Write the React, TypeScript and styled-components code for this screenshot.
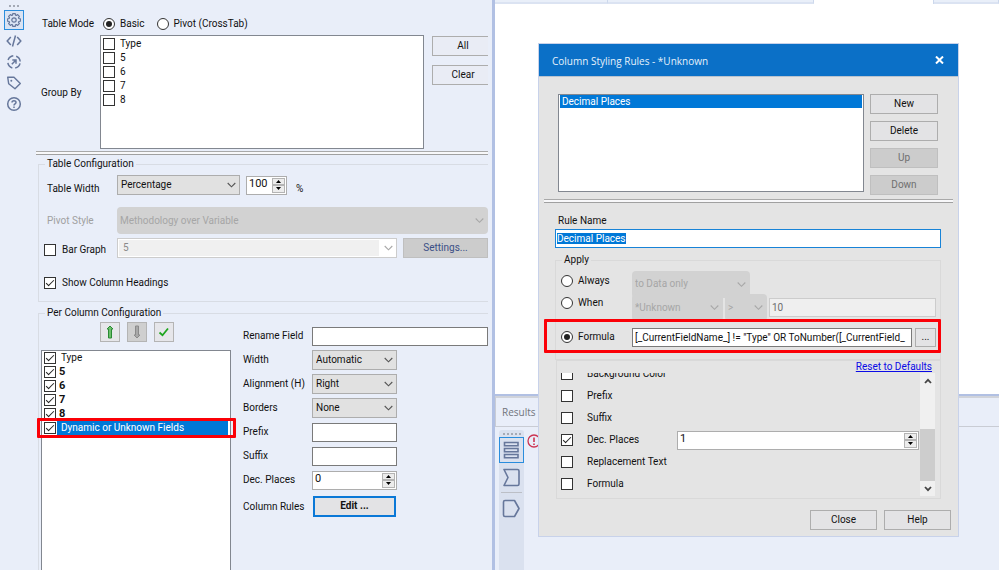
import React, { useEffect, useRef } from "react";
import styled, { createGlobalStyle, css } from "styled-components";

const GlobalStyle = createGlobalStyle`
  *, *::before, *::after { box-sizing: border-box; }
  html, body { margin: 0; height: 100%; overflow: hidden; }
  #root { height: 100%; }
  body, button, input, select {
    font-family: Roboto, "Liberation Sans", Arial, sans-serif;
    font-size: 10px;
    line-height: 14px;
    color: #111;
  }
  button, input, select, fieldset, legend { margin: 0; padding: 0; }
`;

/* ---------- shell ---------- */

const Shell = styled.div`
  display: grid;
  grid-template-columns: 495fr 504fr;
  height: 100vh;
  overflow: hidden;
  background: #e9eef9;
`;

const ConfigPane = styled.section`
  display: flex;
  min-width: 0;
  min-height: 0;
  border-right: 3px solid #b1c0e3;
`;

const SideBar = styled.nav`
  flex: none;
  display: flex;
  flex-direction: column;
  align-items: center;
  width: 28px;
  padding-top: 2px;
  gap: 1px;
`;

const SideButton = styled.button<{ $active?: boolean }>`
  display: grid;
  place-items: center;
  width: 20px;
  height: 20px;
  border: 1px solid ${(p) => (p.$active ? "#2a8ddd" : "transparent")};
  background: ${(p) => (p.$active ? "#d9e3f3" : "transparent")};
  color: #66779b;
`;

const Grip = styled.div`
  height: 7px;
  display: flex;
  align-items: center;
  justify-content: center;
  gap: 2px;
  i {
    width: 2px;
    height: 2px;
    background: #a5aab5;
  }
`;

const ConfigForm = styled.form`
  flex: 1;
  min-width: 0;
  display: flex;
  flex-direction: column;
  margin: 0 4px 0 8px;
  overflow: hidden;
`;

/* ---------- shared controls ---------- */

const Btn = styled.button<{ $primary?: boolean; $w?: number }>`
  flex: none;
  width: ${(p) => (p.$w ? p.$w + "px" : "100%")};
  height: 20px;
  border: 1px solid #adadad;
  background: #e3e3e5;
  &:disabled {
    background: #cccccc;
    border-color: #bfbfbf;
    color: #6f6f6f;
  }
  ${(p) =>
    p.$primary &&
    css`
      height: 21px;
      border: 2px solid #0a78d7;
      font-weight: bold;
    `}
`;

const PaneBtn = styled(Btn)`
  background: #e9ecf5;
`;

const SettingsBtn = styled(Btn)`
  &:disabled {
    color: #3b4f86;
  }
`;

const Check = styled.input.attrs({ type: "checkbox" })`
  appearance: none;
  flex: none;
  width: 12px;
  height: 12px;
  border: 1px solid #333;
  background: #fff;
  display: grid;
  place-items: center;
  &:checked::before {
    content: "";
    width: 8px;
    height: 4px;
    margin-top: -2px;
    border-left: 1px solid #222;
    border-bottom: 1px solid #222;
    transform: rotate(-45deg);
  }
`;

const Radio = styled.input.attrs({ type: "radio" })`
  appearance: none;
  flex: none;
  width: 12px;
  height: 12px;
  border: 1px solid #333;
  border-radius: 50%;
  background: #fff;
  display: grid;
  place-items: center;
  &:checked::before {
    content: "";
    width: 6px;
    height: 6px;
    border-radius: 50%;
    background: #222;
  }
`;

const TextBox = styled.input<{ $tone?: "accent" | "muted" }>`
  display: block;
  width: 100%;
  min-width: 0;
  height: 19px;
  padding: 0 2px;
  border: 1px solid #7a7a7a;
  border-radius: 0;
  background: #fff;
  outline: none;
  ${(p) => p.$tone === "accent" && "border-color: #1883d7; padding: 0 1px;"}
  ${(p) => p.$tone === "muted" && "border-color: #ccc; background: #efefef; color: #6d6d6d;"}
  &::selection {
    background: #0078d7;
    color: #fff;
  }
`;

const SelectWrap = styled.span<{ $w?: number }>`
  position: relative;
  display: block;
  flex: ${(p) => (p.$w ? "none" : "1")};
  width: ${(p) => (p.$w ? p.$w + "px" : "auto")};
  min-width: 0;
  svg {
    position: absolute;
    right: 4px;
    top: 0;
    height: 100%;
    pointer-events: none;
  }
`;

type Look = "normal" | "ghost" | "combo";

const SelectBox = styled.select<{ $look: Look }>`
  appearance: none;
  display: block;
  width: 100%;
  height: 20px;
  padding: 0 20px 0 3px;
  border: 1px solid #adadad;
  border-radius: 0;
  background: #e1e1e1;
  opacity: 1;
  ${(p) =>
    p.$look === "ghost" &&
    css`
      height: 27px;
      border: 0;
      border-radius: 4px;
      background: #d2d2d2;
      color: #a6a6a6;
    `}
  ${(p) =>
    p.$look === "combo" &&
    css`
      padding-left: 5px;
      border-color: #ccc;
      background: linear-gradient(to left, #fff 17px, #f0f0f0 17px);
      box-shadow: inset 0 0 0 1px #fff;
      color: #8a8a8a;
    `}
`;

function Select(props: {
  label: string;
  value: string;
  w?: number;
  look?: Look;
  id?: string;
}) {
  const look = props.look ?? "normal";
  const off = look !== "normal";
  return (
    <SelectWrap $w={props.w}>
      <SelectBox id={props.id} aria-label={props.label} $look={look} disabled={off} defaultValue={props.value}>
        <option>{props.value}</option>
      </SelectBox>
      <svg width="9" viewBox="0 0 9 6" fill="none" stroke={off ? "#a8a8a8" : "#555"} strokeWidth="1.1">
        <path d="M.7 1l3.8 3.8L8.300 1" />
      </svg>
    </SelectWrap>
  );
}

const SpinWrap = styled.span<{ $w?: number }>`
  display: flex;
  flex: ${(p) => (p.$w ? "none" : "1")};
  width: ${(p) => (p.$w ? p.$w + "px" : "auto")};
  height: 19px;
  padding: 1px;
  border: 1px solid #adadad;
  background: #fff;
  input {
    appearance: textfield;
    flex: 1;
    min-width: 0;
    border: 0;
    outline: none;
    padding: 0 1px 2px;
    font-size: 11px;
  }
  input::-webkit-inner-spin-button {
    appearance: none;
  }
`;

const SpinButtons = styled.span`
  flex: none;
  display: grid;
  grid-template-rows: 1fr 1fr;
  width: 13px;
  button {
    display: grid;
    place-items: center;
    min-height: 0;
    border: 1px solid #b4b4b4;
    background: #ececec;
  }
`;

function Spinner(props: { label: string; value: number; w?: number; id?: string }) {
  return (
    <SpinWrap $w={props.w}>
      <input id={props.id} type="number" aria-label={props.label} defaultValue={props.value} />
      <SpinButtons>
        <button type="button" aria-label="Increase">
          <svg width="5" height="3" viewBox="0 0 5 3"><path d="M0 3L2.500 0L5 3z" /></svg>
        </button>
        <button type="button" aria-label="Decrease">
          <svg width="5" height="3" viewBox="0 0 5 3"><path d="M0 0L2.500 3L5 0z" /></svg>
        </button>
      </SpinButtons>
    </SpinWrap>
  );
}

const Option = styled.label`
  display: flex;
  align-items: center;
  gap: 5px;
  white-space: nowrap;
`;

const Rule = styled.hr`
  flex: none;
  width: 100%;
  height: 4px;
  margin: 0;
  border: 0;
  border-top: 1px solid #a9a9a9;
  border-bottom: 1px solid #a0a0a0;
  background: #f8f8fa;
`;

const Highlight = styled.div<{ $inset: string }>`
  position: absolute;
  inset: ${(p) => p.$inset};
  border: 3px solid #fb0007;
  border-radius: 1px;
  pointer-events: none;
  z-index: 2;
`;

/* ---------- configuration form ---------- */

const ModeRow = styled.div`
  display: flex;
  align-items: center;
  height: 20px;
  margin-top: 14px;
  padding-left: 6px;
`;

const ModeLabel = styled.span`
  width: 61px;
`;

const ModeOption = styled(Option)`
  margin-right: 12px;
`;

const GroupRow = styled.div`
  display: grid;
  grid-template-columns: 59px minmax(0, 1fr) 64px;
  padding-left: 5px;
  margin-top: 1px;
  height: 114px;
`;

const GroupLabel = styled.span`
  align-self: center;
  padding-top: 2px;
`;

const ListBox = styled.div`
  border: 1px solid #828790;
  background: #fff;
  padding: 1px 2px;
  min-height: 0;
  overflow: hidden;
`;

const ListItem = styled.label<{ $bold?: boolean; $selected?: boolean }>`
  position: relative;
  display: flex;
  align-items: center;
  height: 14px;
  font-weight: ${(p) => (p.$bold ? "bold" : "normal")};
  span {
    flex: 1;
    margin-left: 1px;
    padding-left: ${(p) => (p.$bold ? "2px" : "4px")};
    ${(p) => p.$bold && "font-size: 11px;"}
    ${(p) => p.$selected && "background: #0078d7; color: #fff;"}
  }
`;

const GroupButtons = styled.div`
  display: flex;
  flex-direction: column;
  align-items: flex-start;
  gap: 9px;
  margin: 1px 0 0 8px;
  overflow: hidden;
`;

const Group = styled.fieldset<{ $open?: boolean }>`
  position: relative;
  min-width: 0;
  border: 1px solid #d8dce4;
  ${(p) => p.$open && "border-right: 0;"}
  legend {
    margin-left: 6px;
    padding: 0 2px;
    height: 14px;
  }
`;

const TableGroup = styled(Group)`
  flex: none;
  margin: 2px 0 0 2px;
  padding-bottom: 8px;
`;

const Line = styled.div<{ $top?: number; $h?: number }>`
  display: flex;
  align-items: center;
  height: ${(p) => p.$h ?? 20}px;
  margin-top: ${(p) => p.$top ?? 0}px;
  padding-left: 5px;
`;

const FieldLabel = styled.label<{ $dim?: boolean; $low?: boolean }>`
  flex: none;
  width: 73px;
  padding-left: 3px;
  padding-top: ${(p) => (p.$low ? "7px" : "0")};
  color: ${(p) => (p.$dim ? "#a0a0a0" : "inherit")};
`;

const BarLabel = styled(Option)`
  flex: none;
  width: 73px;
  gap: 6px;
`;

const BarGraphLabel = styled(BarLabel)`
  padding-top: 4px;
`;

const Percent = styled.span`
  margin-left: 9px;
  padding-top: 7px;
`;

const Gap = styled.span`
  flex: none;
  width: 6px;
`;

const ColumnGroup = styled(Group)`
  flex: 1;
  min-height: 0;
  margin: 4px 0 0 2px;
  border-bottom: 0;
`;

const ColumnGrid = styled.div`
  display: grid;
  grid-template-columns: 190px minmax(0, 1fr);
  column-gap: 12px;
  height: calc(100vh - 316px);
  padding-left: 2px;
`;

const ColumnSide = styled.div`
  display: flex;
  flex-direction: column;
  min-height: 0;
`;

const Tools = styled.div`
  display: flex;
  gap: 7px;
  margin: 2px 0 8px 59px;
`;

const Tool = styled.button`
  display: grid;
  place-items: center;
  width: 20px;
  height: 20px;
  border: 1px solid #b4b4b4;
  background: #e6e6ea;
  &:disabled {
    background: #cfcfcf;
  }
`;

const ColumnList = styled(ListBox)`
  flex: 1;
  padding: 0 2px;
  overflow: visible;
`;

const Fields = styled.div`
  display: grid;
  grid-template-columns: 69px minmax(0, 1fr);
  grid-auto-rows: 20px;
  row-gap: 4px;
  align-content: start;
  align-items: center;
  padding-top: 6px;
`;

const Fixed = styled.div`
  width: 85px;
`;

const RulesButton = styled(Btn)`
  margin: 4px 0 0 1px;
`;

const RulesLabel = styled.span`
  padding-top: 6px;
`;

const RuleSpace = styled.div`
  flex: none;
  display: flex;
  padding-top: 2px;
`;

/* ---------- workspace ---------- */

const Workspace = styled.main`
  position: relative;
  display: flex;
  flex-direction: column;
  min-width: 0;
  background: #fff;
`;

const TabStrip = styled.div`
  display: grid;
  grid-template-columns: 113fr 206fr 120fr 65fr;
  flex: none;
  height: 4px;
`;

const Tab = styled.div<{ $active?: boolean }>`
  border-right: 1px solid #ccd8ec;
  border-bottom: ${(p) => (p.$active ? "0" : "2px solid #dbe3f2")};
  background: ${(p) => (p.$active ? "#fff" : "#e9eff9")};
`;

const Canvas = styled.div`
  flex: 1;
`;

const Results = styled.section`
  flex: none;
  height: 176px;
  border-top: 2px solid #b1c0e3;
  background: #e9eef9;
`;

const ResultsHead = styled.header`
  display: flex;
  align-items: center;
  height: 31px;
  padding-left: 6px;
  border: 1px solid #c9ccd4;
  border-top: 2px solid #d0d3da;
  border-right: 0;
  font: 10px "Open Sans", sans-serif;
  color: #70747c;
`;

const ResultsBody = styled.div`
  display: flex;
  height: 143px;
  padding: 3px 0 0 4px;
`;

const ResultsTools = styled.div`
  display: flex;
  flex-direction: column;
  align-items: center;
  width: 25px;
  background: #dae1ef;
  border-radius: 3px 3px 0 0;
`;

const ResultsTool = styled.button<{ $active?: boolean }>`
  display: grid;
  place-items: center;
  width: 25px;
  height: ${(p) => (p.$active ? 26 : 28)}px;
  border: ${(p) => (p.$active ? "1px solid #2a8ddd" : "0")};
  background: transparent;
  svg {
    fill: none;
    stroke: #66779b;
    stroke-width: 1.6;
  }
`;

const ToolRule = styled.hr`
  width: 21px;
  height: 1px;
  margin: 1px 0;
  border: 0;
  background: #bcbfc6;
`;

const Alert = styled.svg`
  margin: 4px 0 0 3px;
`;

/* ---------- dialog ---------- */

const Dialog = styled.section`
  position: absolute;
  left: 43px;
  top: 43px;
  width: 421px;
  border: 1px solid #c8d2ea;
  background: #e4e4e4;
`;

const TitleBar = styled.header`
  display: flex;
  align-items: center;
  justify-content: space-between;
  height: 33px;
  padding: 0 11px 0 13px;
  border-bottom: 1px solid #b9c3cf;
  background: #0b70c7;
  h1 {
    margin: 0;
    padding-top: 2px;
    font: 10px "Open Sans", sans-serif;
    color: #e6f1fb;
  }
`;

const CloseX = styled.button`
  display: grid;
  place-items: center;
  width: 16px;
  height: 20px;
  border: 0;
  background: transparent;
`;

const RuleArea = styled.div`
  display: grid;
  grid-template-columns: minmax(0, 1fr) 68px;
  column-gap: 6px;
  padding: 17px 20px 4px 19px;
`;

const RuleList = styled(ListBox)`
  margin-bottom: 3px;
  padding: 0 1px;
  div {
    height: 13px;
    padding-left: 2px;
    line-height: 14px;
    background: #0078d7;
    color: #fff;
  }
`;

const RuleButtons = styled.div`
  display: flex;
  flex-direction: column;
  gap: 7px;
`;

const DialogRule = styled.div`
  padding: 0 5px;
  display: flex;
`;

const DialogBody = styled.div`
  padding: 11px 17px 0 16px;
`;

const NameLabel = styled.label`
  display: block;
  height: 15px;
  padding-left: 3px;
`;

const ApplyGroup = styled(Group)`
  margin-top: 5px;
  height: 107px;
  border-color: #d9d9d9;
`;

const ApplyGrid = styled.div`
  display: grid;
  grid-template-columns: 71px minmax(0, 1fr);
  grid-template-rows: 22px 25px 38px;
  padding: 4px 4px 0 5px;
`;

const ApplyRow = styled.div<{ $drop?: boolean }>`
  display: flex;
  align-items: center;
  gap: 2px;
  min-width: 0;
  padding-top: ${(p) => (p.$drop ? "4px" : "0")};
`;

const MiniButton = styled(Btn)`
  width: 21px;
  height: 19px;
  margin-left: 1px;
`;

const ApplyOption = styled(Option)`
  height: 20px;
  align-self: start;
`;

const FormulaOption = styled(Option)`
  align-self: center;
`;

const StyleGroup = styled(Group)`
  margin-left: 1px;
  height: 139px;
  border-color: #d9d9d9;
`;

const ResetRow = styled.div`
  display: flex;
  justify-content: flex-end;
  height: 12px;
  padding-right: 8px;
  a {
    line-height: 12px;
    color: #0a0ae6;
  }
`;

const ScrollRow = styled.div`
  display: flex;
  height: 123px;
  padding: 0 5px 0 4px;
`;

const StyleRows = styled.div`
  flex: 1;
  display: flex;
  flex-direction: column;
  justify-content: flex-end;
  min-width: 0;
  padding-bottom: 1px;
  overflow: hidden;
`;

const StyleRow = styled.div`
  flex: none;
  display: flex;
  align-items: center;
  height: 22px;
`;

const StyleLabel = styled(Option)`
  width: 116px;
  gap: 14px;
`;

const ScrollBar = styled.div`
  flex: none;
  display: grid;
  grid-template-rows: 16px 1fr 52px 15px;
  justify-items: stretch;
  width: 15px;
  margin-left: 1px;
  background: #f0f0f0;
  button {
    display: grid;
    place-items: center;
    border: 0;
    background: transparent;
  }
`;

const Thumb = styled.div`
  grid-row: 3;
  background: #cdcdcd;
`;

const BottomArrow = styled.button`
  grid-row: 4;
`;

const DialogFoot = styled.footer`
  display: flex;
  justify-content: flex-end;
  gap: 7px;
  padding: 11px 7px 6px;
`;

/* ---------- icons ---------- */

function GearIcon() {
  const teeth = Array.from({ length: 8 }, (_, i) => {
    const at = (r: number, d: number) => {
      const a = ((i * 45 + d) * Math.PI) / 180;
      return `${(8 + r * Math.cos(a)).toFixed(2)} ${(8 + r * Math.sin(a)).toFixed(2)}`;
    };
    return `${i ? "L" : "M"}${at(6.5, -11)}L${at(6.5, 11)}L${at(5.1, 17)}L${at(5.1, 28)}`;
  }).join("");
  return (
    <svg width="16" height="16" viewBox="0 0 16 16" fill="none" stroke="currentColor" strokeWidth="1.2" strokeLinejoin="round">
      <path d={teeth + "Z"} />
      <circle cx="8" cy="8" r="2.200" />
    </svg>
  );
}

const CodeIcon = () => (
  <svg width="16" height="16" viewBox="0 0 16 16" fill="none" stroke="currentColor" strokeWidth="1.500">
    <path d="M4.800 4L1.200 8l3.600 4M11.200 4l3.600 4l-3.600 4M9.500 2.500l-3 11" />
  </svg>
);

const TargetIcon = () => (
  <svg width="16" height="16" viewBox="0 0 16 16" fill="none" stroke="currentColor" strokeWidth="1.500">
    <circle cx="8" cy="8" r="6.200" strokeDasharray="6.740 3" strokeDashoffset="-1.500" />
    <path d="M5.800 10.200L9.500 6.500M6.300 6h3.700v3.700" />
  </svg>
);

const TagIcon = () => (
  <svg width="16" height="16" viewBox="0 0 16 16" fill="none" stroke="currentColor" strokeWidth="1.400" strokeLinejoin="round">
    <path d="M1.700 2.200h6.300l6.300 6.300l-5.300 5.300l-6.300-5z" />
    <circle cx="5.300" cy="5.700" r="1" fill="currentColor" stroke="none" />
  </svg>
);

const HelpIcon = () => (
  <svg width="16" height="16" viewBox="0 0 16 16" fill="none" stroke="currentColor" strokeWidth="1.500">
    <circle cx="8" cy="8" r="6.300" />
    <path d="M6 6.600c0-2.600 4-2.500 4-.2c0 1.400-2 1.400-2 3M8 10.500v1.500" />
  </svg>
);

const Dots = ({ n }: { n: number }) => (
  <Grip aria-hidden>
    {Array.from({ length: n }, (_, i) => (
      <i key={i} />
    ))}
  </Grip>
);

/* ---------- page ---------- */

const styleRows = ["Background Color", "Prefix", "Suffix", "Dec. Places", "Replacement Text", "Formula"];
const groupItems = ["Type", "5", "6", "7", "8"];

function Configuration() {
  return (
    <ConfigPane>
      <SideBar aria-label="Sections">
        <Dots n={3} />
        <SideButton $active aria-label="Configuration"><GearIcon /></SideButton>
        <SideButton aria-label="XML"><CodeIcon /></SideButton>
        <SideButton aria-label="Navigation"><TargetIcon /></SideButton>
        <SideButton aria-label="Annotation"><TagIcon /></SideButton>
        <SideButton aria-label="Help"><HelpIcon /></SideButton>
      </SideBar>
      <ConfigForm>
        <ModeRow>
          <ModeLabel>Table Mode</ModeLabel>
          <ModeOption><Radio name="mode" defaultChecked />Basic</ModeOption>
          <ModeOption><Radio name="mode" />Pivot (CrossTab)</ModeOption>
        </ModeRow>
        <GroupRow>
          <GroupLabel>Group By</GroupLabel>
          <ListBox>
            {groupItems.map((t) => (
              <ListItem key={t}><Check /><span>{t}</span></ListItem>
            ))}
          </ListBox>
          <GroupButtons>
            <PaneBtn type="button" $w={62}>All</PaneBtn>
            <PaneBtn type="button" $w={62}>Clear</PaneBtn>
          </GroupButtons>
        </GroupRow>
        <RuleSpace><Rule /></RuleSpace>
        <TableGroup $open>
          <legend>Table Configuration</legend>
          <Line $top={4}>
            <FieldLabel htmlFor="tw" $low>Table Width</FieldLabel>
            <Select id="tw" label="Table Width" value="Percentage" w={123} />
            <Gap />
            <Spinner label="Width value" value={100} w={41} />
            <Percent>%</Percent>
          </Line>
          <Line $top={12} $h={27}>
            <FieldLabel htmlFor="ps" $dim>Pivot Style</FieldLabel>
            <Select id="ps" label="Pivot Style" value="Methodology over Variable" look="ghost" />
          </Line>
          <Line $top={4}>
            <BarGraphLabel><Check />Bar Graph</BarGraphLabel>
            <Select label="Bar graph field" value="5" look="combo" />
            <Gap />
            <SettingsBtn type="button" disabled $w={85}>Settings...</SettingsBtn>
          </Line>
          <Line $top={15}>
            <BarLabel><Check defaultChecked />Show Column Headings</BarLabel>
          </Line>
        </TableGroup>
        <ColumnGroup $open>
          <legend>Per Column Configuration</legend>
          <ColumnGrid>
            <ColumnSide>
              <Tools>
                <Tool type="button" aria-label="Move up">
                  <svg width="12" height="14" viewBox="0 0 12 14">
                    <path d="M6 1L9 4H7.500V13H4.500V4H3z" fill="#6cc06c" stroke="#2a8a35" />
                  </svg>
                </Tool>
                <Tool type="button" aria-label="Move down" disabled>
                  <svg width="12" height="14" viewBox="0 0 12 14">
                    <path d="M6 13L9 10H7.500V1H4.500V10H3z" fill="#a8a8a8" stroke="#8a8a8a" />
                  </svg>
                </Tool>
                <Tool type="button" aria-label="Select all">
                  <svg width="12" height="12" viewBox="0 0 12 12" fill="none" stroke="#1ea51e" strokeWidth="1.800">
                    <path d="M1.500 6.500L4.500 9.200L10 2.500" />
                  </svg>
                </Tool>
              </Tools>
              <ColumnList>
                {groupItems.map((t, i) => (
                  <ListItem key={t} $bold={i > 0}><Check defaultChecked /><span>{t}</span></ListItem>
                ))}
                <ListItem $selected>
                  <Check defaultChecked />
                  <span>Dynamic or Unknown Fields</span>
                  <Highlight $inset="-3px -8px -3px -7px" />
                </ListItem>
              </ColumnList>
            </ColumnSide>
            <Fields>
              <label htmlFor="rename">Rename Field</label>
              <TextBox id="rename" />
              <label htmlFor="width">Width</label>
              <Select id="width" label="Width" value="Automatic" w={85} />
              <label htmlFor="align">Alignment (H)</label>
              <Select id="align" label="Alignment (H)" value="Right" w={85} />
              <label htmlFor="borders">Borders</label>
              <Select id="borders" label="Borders" value="None" w={85} />
              <label htmlFor="prefix">Prefix</label>
              <Fixed><TextBox id="prefix" /></Fixed>
              <label htmlFor="suffix">Suffix</label>
              <Fixed><TextBox id="suffix" /></Fixed>
              <label htmlFor="dec">Dec. Places</label>
              <Spinner id="dec" label="Dec. Places" value={0} w={85} />
              <RulesLabel>Column Rules</RulesLabel>
              <RulesButton type="button" $primary $w={83}>Edit ...</RulesButton>
            </Fields>
          </ColumnGrid>
        </ColumnGroup>
      </ConfigForm>
    </ConfigPane>
  );
}

function RulesDialog() {
  const name = useRef<HTMLInputElement>(null);
  useEffect(() => {
    name.current?.focus();
    name.current?.select();
  }, []);
  return (
    <Dialog role="dialog" aria-labelledby="dlg-title">
      <TitleBar>
        <h1 id="dlg-title">Column Styling Rules - *Unknown</h1>
        <CloseX type="button" aria-label="Close dialog">
          <svg width="9" height="8" viewBox="0 0 9 8" stroke="#fff" strokeWidth="2">
            <path d="M1 .5L8 7.500M8 .5L1 7.500" />
          </svg>
        </CloseX>
      </TitleBar>
      <RuleArea>
        <RuleList role="listbox" aria-label="Rules">
          <div role="option" aria-selected>Decimal Places</div>
        </RuleList>
        <RuleButtons>
          <Btn type="button">New</Btn>
          <Btn type="button">Delete</Btn>
          <Btn type="button" disabled>Up</Btn>
          <Btn type="button" disabled>Down</Btn>
        </RuleButtons>
      </RuleArea>
      <DialogRule><Rule /></DialogRule>
      <DialogBody>
        <NameLabel htmlFor="rule-name">Rule Name</NameLabel>
        <TextBox ref={name} id="rule-name" defaultValue="Decimal Places" $tone="accent" />
        <ApplyGroup>
          <legend>Apply</legend>
          <ApplyGrid>
            <ApplyOption><Radio name="apply" />Always</ApplyOption>
            <ApplyRow $drop>
              <Select label="Apply to" value="to Data only" w={118} look="ghost" />
            </ApplyRow>
            <ApplyOption><Radio name="apply" />When</ApplyOption>
            <ApplyRow $drop>
              <Select label="Field" value="*Unknown" w={91} look="ghost" />
              <Select label="Comparison" value="&gt;" w={42} look="ghost" />
              <TextBox aria-label="Comparison value" defaultValue="10" disabled $tone="muted" />
            </ApplyRow>
            <FormulaOption><Radio name="apply" defaultChecked />Formula</FormulaOption>
            <ApplyRow>
              <TextBox
                aria-label="Formula text"
                defaultValue={'[_CurrentFieldName_] != "Type" OR ToNumber([_CurrentField_'}
              />
              <MiniButton type="button" aria-label="Edit formula">...</MiniButton>
            </ApplyRow>
          </ApplyGrid>
          <Highlight $inset="52px -1px 6px -12px" />
        </ApplyGroup>
        <StyleGroup aria-label="Styles">
          <ResetRow><a href="#reset">Reset to Defaults</a></ResetRow>
          <ScrollRow>
            <StyleRows>
              {styleRows.map((t) => (
                <StyleRow key={t}>
                  <StyleLabel><Check defaultChecked={t === "Dec. Places"} />{t}</StyleLabel>
                  {t === "Dec. Places" && <Spinner label="Decimal places" value={1} />}
                </StyleRow>
              ))}
            </StyleRows>
            <ScrollBar>
              <button type="button" aria-label="Scroll up">
                <svg width="8" height="6" viewBox="0 0 8 6" fill="none" stroke="#444" strokeWidth="1.800">
                  <path d="M1 5L4 1.800L7 5" />
                </svg>
              </button>
              <Thumb />
              <BottomArrow type="button" aria-label="Scroll down">
                <svg width="8" height="6" viewBox="0 0 8 6" fill="none" stroke="#444" strokeWidth="1.800">
                  <path d="M1 1L4 4.200L7 1" />
                </svg>
              </BottomArrow>
            </ScrollBar>
          </ScrollRow>
        </StyleGroup>
      </DialogBody>
      <DialogFoot>
        <Btn type="button" $w={67}>Close</Btn>
        <Btn type="button" $w={67}>Help</Btn>
      </DialogFoot>
    </Dialog>
  );
}

export default function App() {
  return (
    <>
      <GlobalStyle />
      <Shell>
        <Configuration />
        <Workspace>
          <TabStrip>
            <Tab /><Tab /><Tab $active /><Tab />
          </TabStrip>
          <Canvas />
          <Results>
            <ResultsHead>Results</ResultsHead>
            <ResultsBody>
              <ResultsTools>
                <Dots n={5} />
                <ResultsTool $active aria-label="Messages">
                  <svg width="17" height="18" viewBox="0 0 17 18">
                    <path d="M1.500 1.500h13.500v3.200H1.500zM1.500 7.500h13.500v3.200H1.500zM1.500 13.500h13.500v3.200H1.500z" />
                  </svg>
                </ResultsTool>
                <ResultsTool aria-label="Input">
                  <svg width="19" height="19" viewBox="0 0 19 19" strokeLinejoin="round">
                    <path d="M2 1.500h13.500q1.500 0 1.500 1.500v13q0 1.500-1.500 1.500H2l4-8z" />
                  </svg>
                </ResultsTool>
                <ToolRule />
                <ResultsTool aria-label="Output">
                  <svg width="19" height="19" viewBox="0 0 19 19" strokeLinejoin="round">
                    <path d="M3 1.500h9.500l4.500 8l-4.500 8H3q-1.500 0-1.500-1.500V3q0-1.500 1.500-1.500z" />
                  </svg>
                </ResultsTool>
              </ResultsTools>
              <Alert width="14" height="14" viewBox="0 0 14 14" fill="none" stroke="#cc3352" strokeWidth="1.300">
                <circle cx="7" cy="7" r="6" />
                <path d="M7 3.500v4.500M7 9.500v1.500" strokeWidth="1.600" />
              </Alert>
            </ResultsBody>
          </Results>
          <RulesDialog />
        </Workspace>
      </Shell>
    </>
  );
}
